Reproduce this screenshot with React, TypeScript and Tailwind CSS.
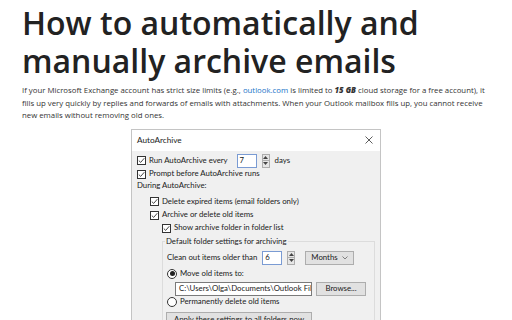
import React from "react";

const ui = { fontFamily: 'Lato, "Noto Sans", sans-serif' };

const Check = () => (
  <span className="flex h-[9px] w-[9px] shrink-0 items-center justify-center border border-[#333] bg-white">
    <svg width="7" height="7" viewBox="0 0 7 7">
      <path d="M0.8 3.6 L2.7 5.4 L6.3 1.2" fill="none" stroke="#333" strokeWidth="0.9" />
    </svg>
  </span>
);

const Radio = ({ on }: { on?: boolean }) => (
  <span className="flex h-[10px] w-[10px] shrink-0 items-center justify-center rounded-full border border-[#333] bg-white">
    {on && <span className="h-[5px] w-[5px] rounded-full bg-[#222]" />}
  </span>
);

const Spinner = () => (
  <span className="ml-[2px] flex h-[14px] w-[8px] flex-col border border-[#adadad] bg-[#e6e6e6]">
    <span className="flex flex-1 items-center justify-center border-b border-[#adadad]">
      <svg width="5" height="3" viewBox="0 0 5 3">
        <path d="M0 3 L2.5 0 L5 3 Z" fill="#444" />
      </svg>
    </span>
    <span className="flex flex-1 items-center justify-center">
      <svg width="5" height="3" viewBox="0 0 5 3">
        <path d="M0 0 L2.5 3 L5 0 Z" fill="#444" />
      </svg>
    </span>
  </span>
);

const Row = ({ className, children }: { className: string; children: React.ReactNode }) => (
  <div className={"flex items-center gap-[3px] whitespace-nowrap " + className}>{children}</div>
);

const AutoArchiveDialog = () => {
  return (
    <div className="mx-auto mt-[7px] w-[250px] border border-[#c4c4c4] text-[7.8px] text-[#1a1a1a]" style={ui}>
      <div className="flex h-[21px] items-center justify-between bg-white pl-[5px] pr-[7px]">
        <span className="text-[8.2px]">AutoArchive</span>
        <svg width="8" height="8" viewBox="0 0 8 8">
          <path d="M0.5 0.5 L7.5 7.5 M7.5 0.5 L0.5 7.5" stroke="#333" strokeWidth="0.8" />
        </svg>
      </div>
      <div className="flex flex-col bg-[#f0f0f0] pl-[5px] pr-[5px] pt-[2px] pb-[20px]">
        <Row className="h-[16px]">
          <Check />
          <span>Run AutoArchive every</span>
          <span className="ml-[6px] flex h-[14px] w-[20px] items-center border border-[#7a9bd3] bg-white pl-[2px]">7</span>
          <Spinner />
          <span className="ml-[2px]">days</span>
        </Row>
        <Row className="h-[11px]">
          <Check />
          <span>Prompt before AutoArchive runs</span>
        </Row>
        <div className="flex h-[13px] items-center">During AutoArchive:</div>
        <Row className="mt-[2px] h-[14px] pl-[13px]">
          <Check />
          <span>Delete expired items (email folders only)</span>
        </Row>
        <Row className="h-[13px] pl-[13px]">
          <Check />
          <span>Archive or delete old items</span>
        </Row>
        <Row className="h-[13px] pl-[25px]">
          <Check />
          <span>Show archive folder in folder list</span>
        </Row>
        <div className="relative ml-[25px] mt-[6px] border border-[#dcdcdc] pl-[4px] pt-[8px]">
          <span className="absolute -top-[7px] left-[2px] whitespace-nowrap bg-[#f0f0f0] px-[1px] leading-[12px]">
            Default folder settings for archiving
          </span>
          <Row className="h-[16px]">
            <span>Clean out items older than</span>
            <span className="ml-[2px] flex h-[14px] w-[20px] items-center border border-[#7a9bd3] bg-white pl-[2px]">6</span>
            <Spinner />
            <span className="ml-[7px] flex h-[14px] w-[49px] items-center justify-between border border-[#adadad] bg-[#e1e1e1] pl-[5px] pr-[5px]">
              <span>Months</span>
              <svg width="6" height="4" viewBox="0 0 6 4">
                <path d="M0.5 0.5 L3 3 L5.5 0.5" fill="none" stroke="#555" strokeWidth="0.7" />
              </svg>
            </span>
          </Row>
          <Row className="h-[16px]">
            <Radio on />
            <span>Move old items to:</span>
          </Row>
          <Row className="h-[14px] pl-[8px]">
            <span className="flex h-[14px] w-[137px] items-center overflow-hidden border border-[#7a7a7a] bg-white pl-[3px]">
              C:\Users\Olga\Documents\Outlook Files\archive.pst
            </span>
            <span className="ml-[1px] flex h-[14px] w-[50px] items-center justify-center border border-[#adadad] bg-[#e1e1e1]">
              Browse...
            </span>
          </Row>
          <Row className="h-[13px]">
            <Radio />
            <span>Permanently delete old items</span>
          </Row>
          <div className="ml-[-1px] mt-[3px] flex h-[16px] w-[146px] items-center justify-center whitespace-nowrap border border-[#adadad] bg-[#e1e1e1]">
            Apply these settings to all folders now
          </div>
        </div>
      </div>
    </div>
  );
};

export default function App() {
  return (
    <div className="h-[320px] w-[512px] overflow-hidden bg-white">
      <div className="px-[22px] pt-[4px]" style={{ fontFamily: '"Open Sans", "Noto Sans", sans-serif' }}>
        <h1 className="text-[32px] font-semibold leading-[38px] text-[#222]">
          How to automatically and manually archive emails
        </h1>
        <p className="mt-[4px] text-[7.8px] leading-[12.5px] text-[#333]">
          If your Microsoft Exchange account has strict size limits (e.g.,{" "}
          <span className="text-[#1a73c8]">outlook.com</span> is limited to{" "}
          <b className="font-extrabold italic">15 GB</b> cloud storage for a free account), it fills up very quickly by
          replies and forwards of emails with attachments. When your Outlook mailbox fills up, you cannot receive new
          emails without removing old ones.
        </p>
      </div>
      <AutoArchiveDialog />
    </div>
  );
}
